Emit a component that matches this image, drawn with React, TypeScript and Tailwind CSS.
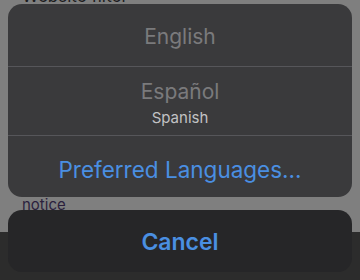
import React from "react";

const font = { fontFamily: "Inter, 'Noto Sans', sans-serif" };

function SheetRow({ children, className = "" }: { children: React.ReactNode; className?: string }) {
  return (
    <div className={`flex flex-col items-center justify-center ${className}`}>{children}</div>
  );
}

export default function App() {
  return (
    <div className="relative h-[280px] w-[360px] overflow-hidden bg-[#7f7f7f]" style={font}>
      {/* dimmed page behind the sheet */}
      <div className="flex h-full flex-col">
        <p className="-mt-[14px] pl-[22px] text-[17px] leading-[20px] text-[#1c1c1e]">Website filter</p>
        <p className="mt-[189px] pl-[22px] text-[15px] leading-[20px] text-[#2b1f3d]">notice</p>
        <div className="mt-auto h-[48px] bg-[#2c2c2c]" />
      </div>

      {/* action sheet */}
      <div className="absolute inset-x-[8px] top-[4px] flex flex-col gap-[13px]">
        <div className="flex flex-col overflow-hidden rounded-[14px] bg-[#3a3a3c]">
          <SheetRow className="h-[63px] border-b border-[#56565a] pt-[3px]">
            <span className="text-[21px] text-[#7a7a7c]">English</span>
          </SheetRow>
          <SheetRow className="h-[69px] border-b border-[#56565a] pt-[3px]">
            <span className="text-[21px] leading-[26px] text-[#7a7a7c]">Español</span>
            <span className="mt-[3px] text-[15px] leading-[19px] text-[#c2c2c4]">Spanish</span>
          </SheetRow>
          <SheetRow className="h-[61px] pt-[6px]">
            <span className="text-[22.5px] text-[#4a8fe2]">Preferred Languages...</span>
          </SheetRow>
        </div>
        <SheetRow className="h-[62px] rounded-[14px] bg-[#262628] pt-[2px]">
          <span className="text-[23px] font-semibold text-[#4a8fe2]">Cancel</span>
        </SheetRow>
      </div>
    </div>
  );
}
